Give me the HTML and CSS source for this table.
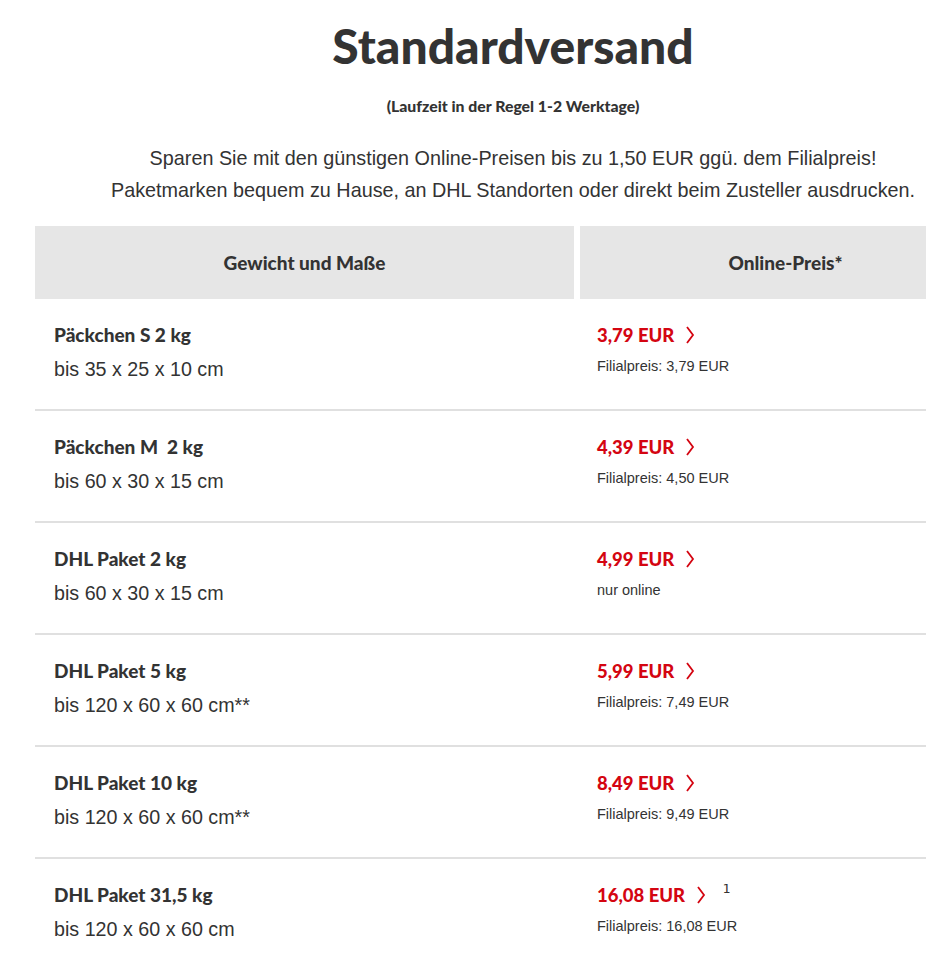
FILE: index.html
```html
<!DOCTYPE html>
<html lang="de">
<head>
<meta charset="utf-8">
<title>Standardversand</title>
<link rel="stylesheet" href="styles.css">
</head>
<body>
<div class="page">
  <h1 class="title">Standardversand</h1>
  <p class="subtitle">(Laufzeit in der Regel 1-2 Werktage)</p>
  <div class="intro">
    <p>Sparen Sie mit den günstigen Online-Preisen bis zu 1,50 EUR ggü. dem Filialpreis!</p>
    <p>Paketmarken bequem zu Hause, an DHL Standorten oder direkt beim Zusteller ausdrucken.</p>
  </div>

  <div class="table">
    <div class="head">
      <div class="hcell">Gewicht und Maße</div>
      <div class="hcell">Online-Preis*</div>
    </div>

    <div class="row">
      <div class="cell">
        <div class="name">Päckchen S 2 kg</div>
        <div class="dims">bis 35 x 25 x 10 cm</div>
      </div>
      <div class="cell price-cell">
        <div class="price">3,79 EUR <svg class="chev" viewBox="0 0 10 18" width="10" height="18"><polyline points="2,1 8,9 2,17"/></svg></div>
        <div class="sub">Filialpreis: 3,79 EUR</div>
      </div>
    </div>

    <div class="row">
      <div class="cell">
        <div class="name">Päckchen M&nbsp; 2 kg</div>
        <div class="dims">bis 60 x 30 x 15 cm</div>
      </div>
      <div class="cell price-cell">
        <div class="price">4,39 EUR <svg class="chev" viewBox="0 0 10 18" width="10" height="18"><polyline points="2,1 8,9 2,17"/></svg></div>
        <div class="sub">Filialpreis: 4,50 EUR</div>
      </div>
    </div>

    <div class="row">
      <div class="cell">
        <div class="name">DHL Paket 2 kg</div>
        <div class="dims">bis 60 x 30 x 15 cm</div>
      </div>
      <div class="cell price-cell">
        <div class="price">4,99 EUR <svg class="chev" viewBox="0 0 10 18" width="10" height="18"><polyline points="2,1 8,9 2,17"/></svg></div>
        <div class="sub">nur online</div>
      </div>
    </div>

    <div class="row">
      <div class="cell">
        <div class="name">DHL Paket 5 kg</div>
        <div class="dims">bis 120 x 60 x 60 cm**</div>
      </div>
      <div class="cell price-cell">
        <div class="price">5,99 EUR <svg class="chev" viewBox="0 0 10 18" width="10" height="18"><polyline points="2,1 8,9 2,17"/></svg></div>
        <div class="sub">Filialpreis: 7,49 EUR</div>
      </div>
    </div>

    <div class="row">
      <div class="cell">
        <div class="name">DHL Paket 10 kg</div>
        <div class="dims">bis 120 x 60 x 60 cm**</div>
      </div>
      <div class="cell price-cell">
        <div class="price">8,49 EUR <svg class="chev" viewBox="0 0 10 18" width="10" height="18"><polyline points="2,1 8,9 2,17"/></svg></div>
        <div class="sub">Filialpreis: 9,49 EUR</div>
      </div>
    </div>

    <div class="row">
      <div class="cell">
        <div class="name">DHL Paket 31,5 kg</div>
        <div class="dims">bis 120 x 60 x 60 cm</div>
      </div>
      <div class="cell price-cell">
        <div class="price">16,08 EUR <svg class="chev" viewBox="0 0 10 18" width="10" height="18"><polyline points="2,1 8,9 2,17"/></svg><sup class="fn">1</sup></div>
        <div class="sub">Filialpreis: 16,08 EUR</div>
      </div>
    </div>
  </div>
</div>
</body>
</html>
```

FILE: styles.css
```css
html, body {
  margin: 0;
  padding: 0;
  overflow-x: hidden;
  background: #ffffff;
}

body {
  font-family: "Liberation Sans", Arial, sans-serif;
  color: #333333;
}

.page {
  width: 956px;
  margin-left: 35px;
  padding-top: 16px;
}

.title {
  margin: 0;
  font-family: Lato, "Liberation Sans", sans-serif;
  font-size: 48px;
  line-height: 60px;
  font-weight: 900;
  text-align: center;
  color: #333333;
}

.subtitle {
  margin: 20px 0 0;
  font-family: Lato, "Liberation Sans", sans-serif;
  font-size: 15.8px;
  line-height: 20px;
  font-weight: 900;
  text-align: center;
}

.intro {
  margin-top: 26px;
  text-align: center;
  font-size: 19.8px;
  line-height: 32px;
}

.intro p {
  margin: 0;
}

.table {
  margin-top: 20px;
}

.head {
  display: grid;
  grid-template-columns: 539px 411px;
  column-gap: 6px;
}

.hcell {
  background: #e6e6e6;
  height: 73px;
  display: flex;
  align-items: center;
  justify-content: center;
  font-family: Lato, "Liberation Sans", sans-serif;
  font-size: 19px;
  font-weight: 900;
}

.row {
  display: grid;
  grid-template-columns: 539px 411px;
  column-gap: 6px;
  height: 110px;
  border-bottom: 2px solid #e0e0e0;
}

.cell {
  padding: 24px 0 0 19px;
}

.price-cell {
  padding-left: 17px;
}

.name {
  font-family: Lato, "Liberation Sans", sans-serif;
  font-size: 19px;
  line-height: 24px;
  font-weight: 900;
}

.dims {
  margin-top: 10px;
  font-size: 19.7px;
  line-height: 24px;
}

.price {
  display: flex;
  align-items: center;
  font-family: Lato, "Liberation Sans", sans-serif;
  font-size: 18.5px;
  line-height: 24px;
  font-weight: 900;
  color: #d40511;
  white-space: pre;
}

.chev {
  margin-left: 6px;
  fill: none;
  stroke: #d40511;
  stroke-width: 1.8;
}

.fn {
  align-self: flex-start;
  margin-left: 17px;
  margin-top: -6px;
  font-family: "DejaVu Sans Mono", monospace;
  font-size: 13px;
  font-weight: 400;
  color: #333333;
}

.sub {
  margin-top: 9px;
  font-size: 14.5px;
  line-height: 20px;
}
```
